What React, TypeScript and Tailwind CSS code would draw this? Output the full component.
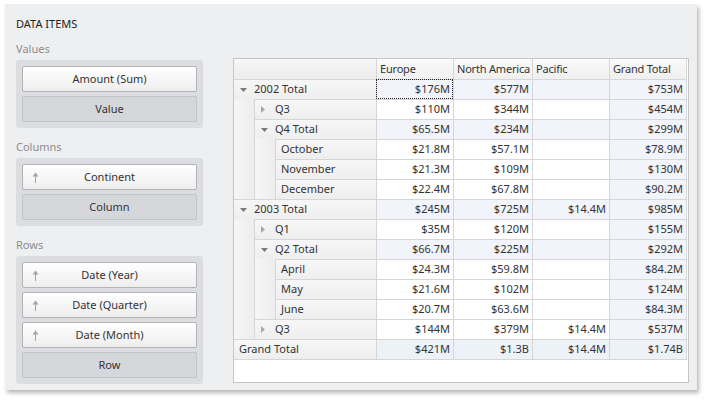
import React from 'react'

type Row = {
  level: number
  label: string
  arrow?: 'down' | 'right'
  total?: boolean
  grand?: boolean
  vals: string[]
}

const rows: Row[] = [
  { level: 0, label: '2002 Total', arrow: 'down', total: true, vals: ['$176M', '$577M', '', '$753M'] },
  { level: 1, label: 'Q3', arrow: 'right', vals: ['$110M', '$344M', '', '$454M'] },
  { level: 1, label: 'Q4 Total', arrow: 'down', total: true, vals: ['$65.5M', '$234M', '', '$299M'] },
  { level: 2, label: 'October', vals: ['$21.8M', '$57.1M', '', '$78.9M'] },
  { level: 2, label: 'November', vals: ['$21.3M', '$109M', '', '$130M'] },
  { level: 2, label: 'December', vals: ['$22.4M', '$67.8M', '', '$90.2M'] },
  { level: 0, label: '2003 Total', arrow: 'down', total: true, vals: ['$245M', '$725M', '$14.4M', '$985M'] },
  { level: 1, label: 'Q1', arrow: 'right', vals: ['$35M', '$120M', '', '$155M'] },
  { level: 1, label: 'Q2 Total', arrow: 'down', total: true, vals: ['$66.7M', '$225M', '', '$292M'] },
  { level: 2, label: 'April', vals: ['$24.3M', '$59.8M', '', '$84.2M'] },
  { level: 2, label: 'May', vals: ['$21.6M', '$102M', '', '$124M'] },
  { level: 2, label: 'June', vals: ['$20.7M', '$63.6M', '', '$84.3M'] },
  { level: 1, label: 'Q3', arrow: 'right', vals: ['$144M', '$379M', '$14.4M', '$537M'] },
  { level: 0, label: 'Grand Total', grand: true, vals: ['$421M', '$1.3B', '$14.4M', '$1.74B'] },
]

const colWidths = ['w-[77px]', 'w-[79px]', 'w-[77px]', 'w-[78px] border-r']

function UpArrow() {
  return (
    <svg width="7" height="11" viewBox="0 0 7 11" className="absolute left-[9px] top-[7px]">
      <path d="M3.5 0.5 L6.5 4.5 L0.5 4.5 Z" fill="#a3a3a3" />
      <rect x="3" y="4" width="1" height="7" fill="#a3a3a3" />
    </svg>
  )
}

function FieldButton({ label, sort }: { label: string; sort?: boolean }) {
  return (
    <div className="relative flex h-[26px] items-center justify-center rounded-[2px] border border-[#b3b3b3] bg-gradient-to-b from-white to-[#eeeeee] text-[#333]">
      {sort && <UpArrow />}
      {label}
    </div>
  )
}

function DropArea({ label }: { label: string }) {
  return (
    <div className="flex h-[26px] items-center justify-center rounded-[2px] border border-[#c4c5c8] bg-[#d6d7da] text-[#333]">
      {label}
    </div>
  )
}

function Section({ title, children }: { title: string; children: React.ReactNode }) {
  return (
    <div className="flex flex-col">
      <div className="flex h-[22px] items-center text-[#8d8d8d]">{title}</div>
      <div className="flex flex-col gap-[4px] rounded-[3px] bg-[#dcdde0] p-[6px]">{children}</div>
    </div>
  )
}

function Arrow({ dir }: { dir: 'down' | 'right' }) {
  return (
    <span className="flex w-[14px] items-center">
      {dir === 'down' ? (
        <svg width="7" height="4" viewBox="0 0 7 4">
          <path d="M0 0 L7 0 L3.5 4 Z" fill="#7a7a7a" />
        </svg>
      ) : (
        <svg width="4" height="7" viewBox="0 0 4 7">
          <path d="M0 0 L4 3.5 L0 7 Z" fill="#a8a8a8" />
        </svg>
      )}
    </span>
  )
}

function GridRow({ row, first }: { row: Row; first: boolean }) {
  const spacers = Array.from({ length: row.level })
  return (
    <div className="flex h-[20px]">
      <div className="flex w-[142px]">
        {spacers.map((_, i) => (
          <div key={i} className="w-[21px] shrink-0 border-r border-[#d6d6d6] bg-gradient-to-r from-[#f6f6f6] to-[#ededed]" />
        ))}
        <div
          className={`flex flex-1 items-center border-t border-[#d6d6d6] bg-gradient-to-b from-[#f7f7f7] to-[#eeeeee] ${
            row.arrow ? 'pl-[6px]' : 'pl-[5px]'
          }`}
        >
          {row.arrow && <Arrow dir={row.arrow} />}
          {row.label}
        </div>
      </div>
      {row.vals.map((v, i) => {
        const blue = row.total || row.grand || i === 3
        return (
          <div
            key={i}
            className={`flex items-center justify-end border-l border-t border-[#d6d6d6] pr-[3px] ${colWidths[i]} ${
              row.grand ? 'bg-[#edf1f8]' : blue ? 'bg-[#f1f4fa]' : 'bg-white'
            } ${first && i === 0 ? 'outline-1 -outline-offset-1 outline-dotted outline-[#222]' : ''}`}
          >
            {v}
          </div>
        )
      })}
    </div>
  )
}

export default function App() {
  return (
    <div
      className="h-[406px] w-[710px] overflow-hidden bg-white pl-[5px] pt-[4px] text-[11px] text-[#333]"
      style={{ fontFamily: '"Noto Sans", "Open Sans", sans-serif' }}
    >
      <div className="flex h-[386px] w-[692px] bg-[#eeeff1] pl-[11px] pt-[13px] shadow-[2px_3px_4px_rgba(0,0,0,0.28)]">
        {/* Data items panel */}
        <div className="flex w-[187px] flex-col">
          <div className="flex h-[14px] items-center text-[#222]">DATA ITEMS</div>
          <div className="mt-[7px] flex flex-col gap-[8px]">
            <Section title="Values">
              <FieldButton label="Amount (Sum)" />
              <DropArea label="Value" />
            </Section>
            <Section title="Columns">
              <FieldButton label="Continent" sort />
              <DropArea label="Column" />
            </Section>
            <Section title="Rows">
              <FieldButton label="Date (Year)" sort />
              <FieldButton label="Date (Quarter)" sort />
              <FieldButton label="Date (Month)" sort />
              <DropArea label="Row" />
            </Section>
          </div>
        </div>

        {/* Pivot grid */}
        <div className="ml-[30px] mt-[41px] flex h-[325px] w-[456px] flex-col border border-[#c6c6c6] bg-white">
          <div className="flex h-[20px]">
            <div className="w-[142px] bg-gradient-to-b from-[#f7f7f7] to-[#ececec]" />
            {['Europe', 'North America', 'Pacific', 'Grand Total'].map((h, i) => (
              <div
                key={h}
                className={`flex items-center whitespace-nowrap border-l border-[#d6d6d6] bg-gradient-to-b from-[#fafafa] to-[#efefef] pl-[3px] tracking-[-0.2px] ${colWidths[i]}`}
              >
                {h}
              </div>
            ))}
          </div>
          {rows.map((r, i) => (
            <GridRow key={i} row={r} first={i === 0} />
          ))}
          <div className="w-[453px] border-t border-[#d6d6d6]" />
        </div>
      </div>
    </div>
  )
}
